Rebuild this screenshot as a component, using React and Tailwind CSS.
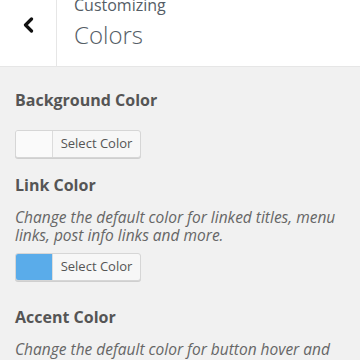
import React from "react";

function ColorButton({ swatch }) {
  return (
    <div className="flex h-[28px] w-[126px] rounded-[3px] border border-[#d6d6d6] bg-[#f7f7f7] shadow-[0_1px_0_#cfcfcf] overflow-hidden">
      <div className="w-[37px] h-full border-r border-[#dcdcdc]" style={{ background: swatch }} />
      <div className="flex-1 flex items-center justify-center text-[13px] text-[#555] font-medium">
        Select Color
      </div>
    </div>
  );
}

export default function App() {
  return (
    <div className="w-[360px] h-[360px] overflow-hidden bg-[#f1f1f1]" style={{ fontFamily: '"Open Sans", sans-serif' }}>
      <div className="h-[67px] bg-white flex border-b border-[#e6e6e6]">
        <div className="w-[57px] shrink-0 border-r border-[#e6e6e6] flex items-start justify-center pt-[17px]">
          <svg width="11" height="16" viewBox="0 0 11 16">
            <path d="M8.5 2 L2.5 8 L8.5 14" fill="none" stroke="#111" strokeWidth="3.2" strokeLinecap="round" strokeLinejoin="round" />
          </svg>
        </div>
        <div className="pl-[17px] flex flex-col">
          <div className="text-[16px] leading-[20px] text-[#555d66] -mt-[5px]">Customizing</div>
          <div className="text-[24px] leading-[32px] font-light text-[#555d66] mt-[4px]">Colors</div>
        </div>
      </div>
      <div className="px-[15px] pt-[22px] text-[#555]">
        <div className="text-[16px] leading-[22px] font-bold">Background Color</div>
        <div className="mt-[19px]"><ColorButton swatch="#fafafa" /></div>
        <div className="text-[16px] leading-[22px] font-bold mt-[16px]">Link Color</div>
        <div className="text-[15.5px] leading-[18px] italic text-[#666] mt-[12px]">
          Change the default color for linked titles, menu links, post info links and more.
        </div>
        <div className="mt-[9px]"><ColorButton swatch="#5aacea" /></div>
        <div className="text-[16px] leading-[22px] font-bold mt-[25px]">Accent Color</div>
        <div className="text-[15.5px] leading-[18px] italic text-[#666] mt-[12px]">
          Change the default color for button hover and
        </div>
      </div>
    </div>
  );
}
